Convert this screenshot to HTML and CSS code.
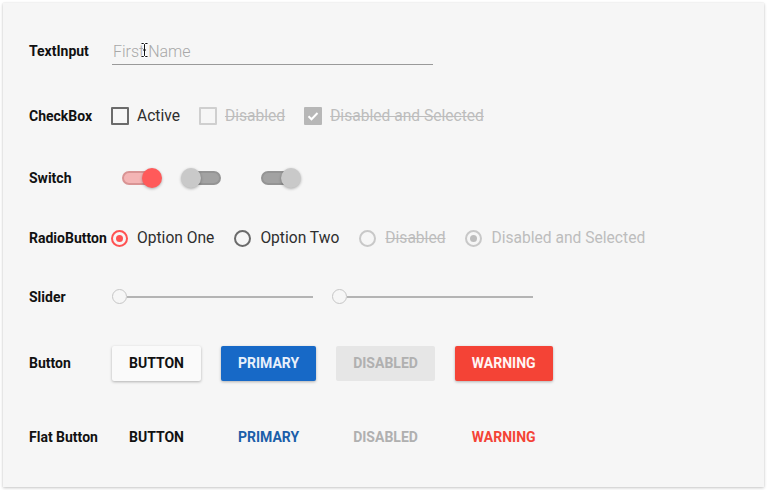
FILE: index.html
```html
<!DOCTYPE html>
<html>
<head>
<meta charset="utf-8">
<link rel="stylesheet" href="styles.css">
</head>
<body>
<div class="panel">
  <div class="row r1">
    <div class="label">TextInput</div>
    <div class="textinput">
      <input class="field" type="text" placeholder="First Name">
      <svg class="ibeam" width="9" height="16" viewBox="0 0 9 16">
        <path d="M1.5 1.5h2l1 1 1-1h2M4.5 2.5v11M1.5 14.5h2l1-1 1 1h2M3 8h3" fill="none" stroke="#fff" stroke-width="2.5"/>
        <path d="M1.5 1.5h2l1 1 1-1h2M4.5 2.5v11M1.5 14.5h2l1-1 1 1h2M3 8h3" fill="none" stroke="#111" stroke-width="1"/>
      </svg>
    </div>
  </div>

  <div class="row r2">
    <div class="label">CheckBox</div>
    <div class="group">
      <div class="item"><span class="box"></span><span class="txt">Active</span></div>
      <div class="item dis"><span class="box box-dis"></span><span class="txt strike">Disabled</span></div>
      <div class="item dis"><span class="box box-checked"><svg width="14" height="14" viewBox="0 0 14 14"><path d="M2.5 7.2l3 3 6-6.2" fill="none" stroke="#fff" stroke-width="2"/></svg></span><span class="txt strike">Disabled and Selected</span></div>
    </div>
  </div>

  <div class="row r3">
    <div class="label">Switch</div>
    <div class="group switches">
      <div class="switch on s1"><span class="track"></span><span class="thumb"></span></div>
      <div class="switch off s2"><span class="track"></span><span class="thumb"></span></div>
      <div class="switch on dis s3"><span class="track"></span><span class="thumb"></span></div>
    </div>
  </div>

  <div class="row r4">
    <div class="label">RadioButton</div>
    <div class="group radios">
      <div class="item"><span class="radio sel"><span class="dot"></span></span><span class="txt">Option One</span></div>
      <div class="item"><span class="radio"></span><span class="txt">Option Two</span></div>
      <div class="item dis"><span class="radio rdis"></span><span class="txt strike">Disabled</span></div>
      <div class="item dis"><span class="radio rdis"><span class="dot gdot"></span></span><span class="txt">Disabled and Selected</span></div>
    </div>
  </div>

  <div class="row r5">
    <div class="label">Slider</div>
    <div class="group sliders">
      <div class="slider"><span class="sthumb"></span><span class="strack"></span></div>
      <div class="slider"><span class="sthumb"></span><span class="strack"></span></div>
    </div>
  </div>

  <div class="row r6">
    <div class="label">Button</div>
    <div class="group buttons">
      <div class="btn b-default">BUTTON</div>
      <div class="btn b-primary">PRIMARY</div>
      <div class="btn b-disabled">DISABLED</div>
      <div class="btn b-warning">WARNING</div>
    </div>
  </div>

  <div class="row r7">
    <div class="label">Flat Button</div>
    <div class="group buttons">
      <div class="btn flat">BUTTON</div>
      <div class="btn flat f-primary">PRIMARY</div>
      <div class="btn flat f-disabled">DISABLED</div>
      <div class="btn flat f-warning">WARNING</div>
    </div>
  </div>
</div>
</body>
</html>
```

FILE: styles.css
```css
* { box-sizing: border-box; }
html, body { margin: 0; padding: 0; background: #ffffff; }
body { font-family: Roboto, "Noto Sans", "Liberation Sans", sans-serif; }

.panel {
  margin: 3px;
  width: 761px;
  height: 484px;
  background: #f6f6f6;
  box-shadow: 0 1px 3px rgba(0,0,0,0.22), 0 0 1px rgba(0,0,0,0.1);
  padding: 16px 0 0 26px;
}

.row { display: flex; align-items: center; }
.r1 { height: 64px; }
.r2 { height: 66px; }
.r3 { height: 58px; }
.r4 { height: 62px; }
.r5 { height: 55px; }
.r6 { height: 78px; }
.r7 { height: 70px; }

.label {
  width: 83px;
  flex: none;
  font-size: 14px;
  font-weight: 700;
  color: #111;
}

/* text input */
.textinput { position: relative; width: 321px; margin-top: -2px; }
.field {
  display: block;
  width: 100%;
  height: 30px;
  border: none;
  border-bottom: 1px solid #9a9a9a;
  background: transparent;
  padding: 3px 0 0 1px;
  font-family: Roboto, "Liberation Sans", sans-serif;
  font-size: 16px;
  font-weight: 300;
  color: #333;
  outline: none;
}
.field::placeholder { color: #a8a8a8; }
.ibeam { position: absolute; left: 28px; top: 7px; }

.group { display: flex; align-items: center; }
.item { display: flex; align-items: center; }

/* checkbox */
.r2 .group { gap: 19px; margin-left: -1px; }
.box {
  width: 18px; height: 18px;
  border: 2px solid #6b6b6b;
  border-radius: 1px;
  display: flex; align-items: center; justify-content: center;
}
.box-dis { border-color: #cfcfcf; }
.box-checked { border: none; background: #b7b7b7; }
.txt { font-size: 15.6px; line-height: 20px; color: #2e2e2e; margin-left: 8px; }
.dis .txt { color: #bdbdbd; }
.strike { text-decoration: line-through; }

/* switch */
.switch { position: relative; width: 40px; height: 20px; }
.track {
  position: absolute; top: 3px; width: 36px; height: 14px;
  border-radius: 7px;
}
.thumb {
  position: absolute; top: 0; width: 20px; height: 20px;
  border-radius: 50%;
  box-shadow: 0 1px 3px rgba(0,0,0,0.3);
}
.on .track { left: 0; }
.on .thumb { right: 0; }
.off .track { left: 4px; }
.off .thumb { left: 0; }
.s1 .track { background: #f4b5b5; border: 2px solid #d99494; }
.s1 .thumb { background: #ff5a5a; }
.s2 .track, .s3 .track { background: #a2a2a2; border: 2px solid #949494; }
.s2 .thumb, .s3 .thumb { background: #c9c9c9; }
.s1 { margin-left: 10px; }
.s2 { margin-left: 19px; }
.s3 { margin-left: 40px; }

/* radio */
.radios { gap: 20px; margin-left: -1px; }
.radio {
  width: 17px; height: 17px;
  border: 2px solid #6b6b6b;
  border-radius: 50%;
  display: flex; align-items: center; justify-content: center;
}
.radios .txt { margin-left: 9px; }
.radio.sel { border-color: #ff5252; }
.radio.rdis { border-color: #c8c8c8; }
.dot { width: 7px; height: 7px; border-radius: 50%; background: #ff5252; }
.gdot { background: #bdbdbd; }

/* slider */
.sliders { gap: 19px; }
.slider { width: 201px; display: flex; align-items: center; }
.sthumb {
  width: 15px; height: 15px; flex: none;
  border: 1.5px solid #c6c6c6;
  border-radius: 50%;
  background: #f6f6f6;
}
.strack { flex: 1; height: 2px; background: #b4b4b4; }

/* buttons */
.buttons { gap: 20px; }
.btn {
  height: 35px;
  padding: 0 17px;
  display: flex; align-items: center; justify-content: center;
  font-size: 14px;
  font-weight: 700;
  border-radius: 2px;
  color: #111;
}
.b-default { background: #fafafa; box-shadow: 0 1px 3px rgba(0,0,0,0.28); }
.b-primary { background: #1769c7; color: #e8f0fb; box-shadow: 0 1px 3px rgba(0,0,0,0.28); }
.b-disabled { background: #e6e6e6; color: #b0b0b0; }
.b-warning { background: #f44336; color: #fff5f4; box-shadow: 0 1px 3px rgba(0,0,0,0.28); }

.flat { background: transparent; }
.f-primary { color: #1b5ea9; }
.f-disabled { color: #b0b0b0; }
.f-warning { color: #f44336; }
```
